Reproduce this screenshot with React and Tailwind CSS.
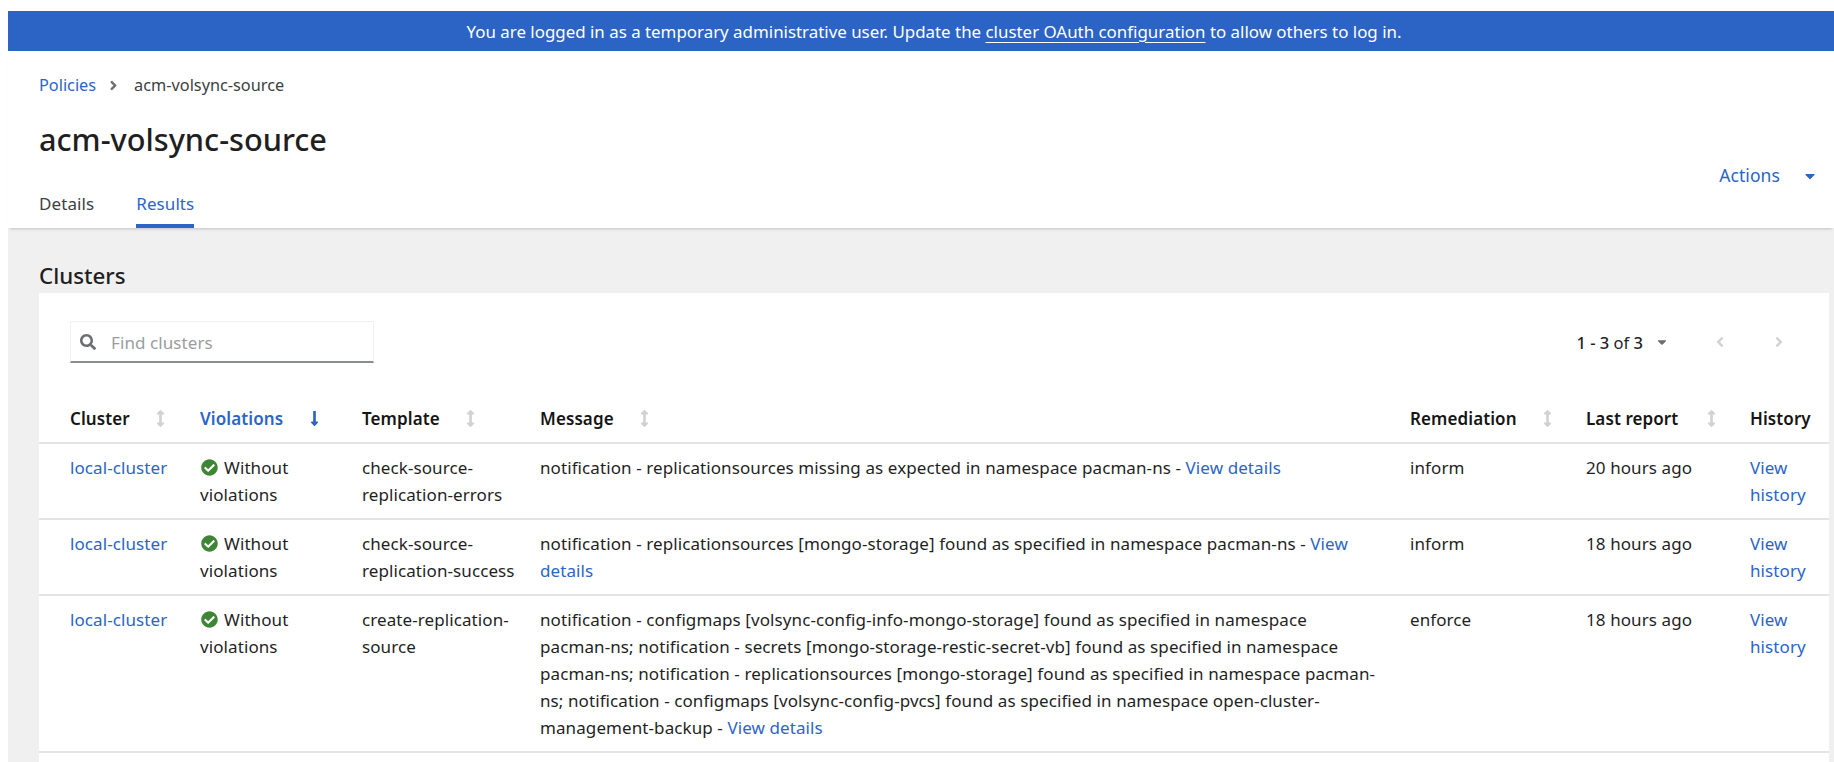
import React from "react";
import { FaArrowsAltV, FaLongArrowAltDown, FaCheckCircle, FaCaretDown, FaAngleLeft, FaAngleRight, FaSearch } from "react-icons/fa";

const Link = ({ children }) => <span className="text-[#2b65c6]">{children}</span>;

const Sort = () => <FaArrowsAltV className="text-[#d2d2d2] text-[17px]" />;

const Head = ({ label, gap, active, sort = true }) => (
  <th className="p-0 pb-[10px] text-left align-bottom font-semibold whitespace-nowrap">
    <span className={`flex items-center ${gap} ${active ? "text-[#2b65c6]" : "text-[#151515]"}`}>
      {label}
      {active ? <FaLongArrowAltDown className="text-[17px]" /> : sort ? <Sort /> : null}
    </span>
  </th>
);

const Status = () => (
  <>
    <FaCheckCircle className="inline-block text-[#3e8635] text-[17px] mr-[6px] ml-[1px] align-[-2px]" />
    Without
    <br />
    violations
  </>
);

const rows = [
  {
    h: "h-[76px]",
    template: ["check-source-", "replication-errors"],
    message: (
      <>
        notification - replicationsources missing as expected in namespace pacman-ns - <Link>View details</Link>
      </>
    ),
    rem: "inform",
    last: "20 hours ago",
  },
  {
    h: "h-[76px]",
    template: ["check-source-", "replication-success"],
    message: (
      <>
        notification - replicationsources [mongo-storage] found as specified in namespace pacman-ns - <Link>View</Link>
        <br />
        <Link>details</Link>
      </>
    ),
    rem: "inform",
    last: "18 hours ago",
  },
  {
    h: "h-[157px]",
    template: ["create-replication-", "source"],
    message: (
      <>
        notification - configmaps [volsync-config-info-mongo-storage] found as specified in namespace
        <br />
        pacman-ns; notification - secrets [mongo-storage-restic-secret-vb] found as specified in namespace
        <br />
        pacman-ns; notification - replicationsources [mongo-storage] found as specified in namespace pacman-
        <br />
        ns; notification - configmaps [volsync-config-pvcs] found as specified in namespace open-cluster-
        <br />
        management-backup - <Link>View details</Link>
      </>
    ),
    rem: "enforce",
    last: "18 hours ago",
  },
];

export default function App() {
  return (
    <div className="h-[762px] overflow-hidden bg-white pt-[11px] pl-2 font-['Noto_Sans',sans-serif] text-[17px] leading-[27px] tracking-[0.09px] text-[#1f1f1f]">
      <div className="relative z-10 flex h-[40px] items-center justify-center bg-[#2b64c5] pl-[26px] text-[16.9px] tracking-normal text-white shadow-[0_3px_3px_-2px_rgba(0,0,0,0.15)]">
        <span>
          You are logged in as a temporary administrative user. Update the{" "}
          <span className="underline underline-offset-[4px]">cluster OAuth configuration</span> to allow others to log in.
        </span>
      </div>

      <header className="relative z-10 flex h-[177px] justify-between bg-white pl-[31px] pr-[16px] shadow-[0_3px_3px_-2px_rgba(0,0,0,0.2)]">
        <div className="flex flex-col">
          <nav className="mt-[21px] flex h-[27px] items-center text-[16.3px] tracking-normal">
            <Link>Policies</Link>
            <FaAngleRight className="mr-[13px] ml-[10px] text-[15px] text-[#6a6e73]" />
            <span className="text-[#3c3f42]">acm-volsync-source</span>
          </nav>
          <h1 className="mt-[20px] text-[30.7px] leading-[40px] font-medium tracking-normal">acm-volsync-source</h1>
          <div className="mt-auto flex gap-[42px]">
            <span className="h-[40px] pt-[2px] text-[#3c3f42]">Details</span>
            <span className="h-[40px] border-b-4 border-[#2b65c6] pt-[2px] text-[#2b65c6]">Results</span>
          </div>
        </div>
        <div className="mt-[111px] flex h-[27px] items-center gap-[22px] text-[17.5px] text-[#2b65c6]">
          <span>Actions</span>
          <FaCaretDown className="text-[16px]" />
        </div>
      </header>

      <main className="h-[534px] bg-[#f0f0f0] pl-[31px] pr-[5px]">
        <h2 className="h-[65px] pt-[33px] text-[22.3px] leading-[30px] font-medium tracking-normal">Clusters</h2>
        <section className="h-[469px] bg-white">
          <div className="flex h-[107px] items-start justify-between pt-[28px] pl-[31px] pr-[42px]">
            <div className="flex h-[42px] w-[304px] items-center border border-[#f0f0f0] border-b-2 border-b-[#8a8d90] pl-[9px]">
              <FaSearch className="text-[16px] text-[#6a6e73]" />
              <span className="mt-[1px] ml-[15px] text-[#9a9da0]">Find clusters</span>
            </div>
            <div className="flex h-[42px] items-center">
              <span className="text-[16.5px] tracking-normal">
                <span className="font-medium">1 - 3</span> of <span className="font-medium">3</span>
              </span>
              <FaCaretDown className="ml-[12px] text-[14px] text-[#6a6e73]" />
              <FaAngleLeft className="ml-[43px] text-[16px] text-[#d2d2d2]" />
              <FaAngleRight className="ml-[43px] text-[16px] text-[#d2d2d2]" />
            </div>
          </div>
          <table className="w-full table-fixed border-collapse">
            <colgroup>
              <col className="w-[161px]" />
              <col className="w-[162px]" />
              <col className="w-[178px]" />
              <col className="w-[870px]" />
              <col className="w-[176px]" />
              <col className="w-[164px]" />
              <col />
            </colgroup>
            <thead>
              <tr className="h-[43px] border-b-2 border-[#e4e4e4]">
                <Head label={<span className="pl-[31px]">Cluster</span>} gap="gap-[22px]" />
                <Head label="Violations" gap="gap-[23px]" active />
                <Head label="Template" gap="gap-[22px]" />
                <Head label="Message" gap="gap-[22px]" />
                <Head label="Remediation" gap="gap-[22px]" />
                <Head label="Last report" gap="gap-[25px]" />
                <Head label="History" sort={false} />
              </tr>
            </thead>
            <tbody>
              {rows.map((r, i) => (
                <tr key={i} className={`${r.h} border-b-2 border-[#e4e4e4] align-top`}>
                  <td className="pt-[10px] pl-[31px]"><Link>local-cluster</Link></td>
                  <td className="pt-[10px]"><Status /></td>
                  <td className="pt-[10px] whitespace-nowrap">{r.template[0]}<br />{r.template[1]}</td>
                  <td className="pt-[10px] whitespace-nowrap">{r.message}</td>
                  <td className="pt-[10px]">{r.rem}</td>
                  <td className="pt-[10px]">{r.last}</td>
                  <td className="pt-[10px]"><Link>View<br />history</Link></td>
                </tr>
              ))}
            </tbody>
          </table>
        </section>
      </main>
    </div>
  );
}
